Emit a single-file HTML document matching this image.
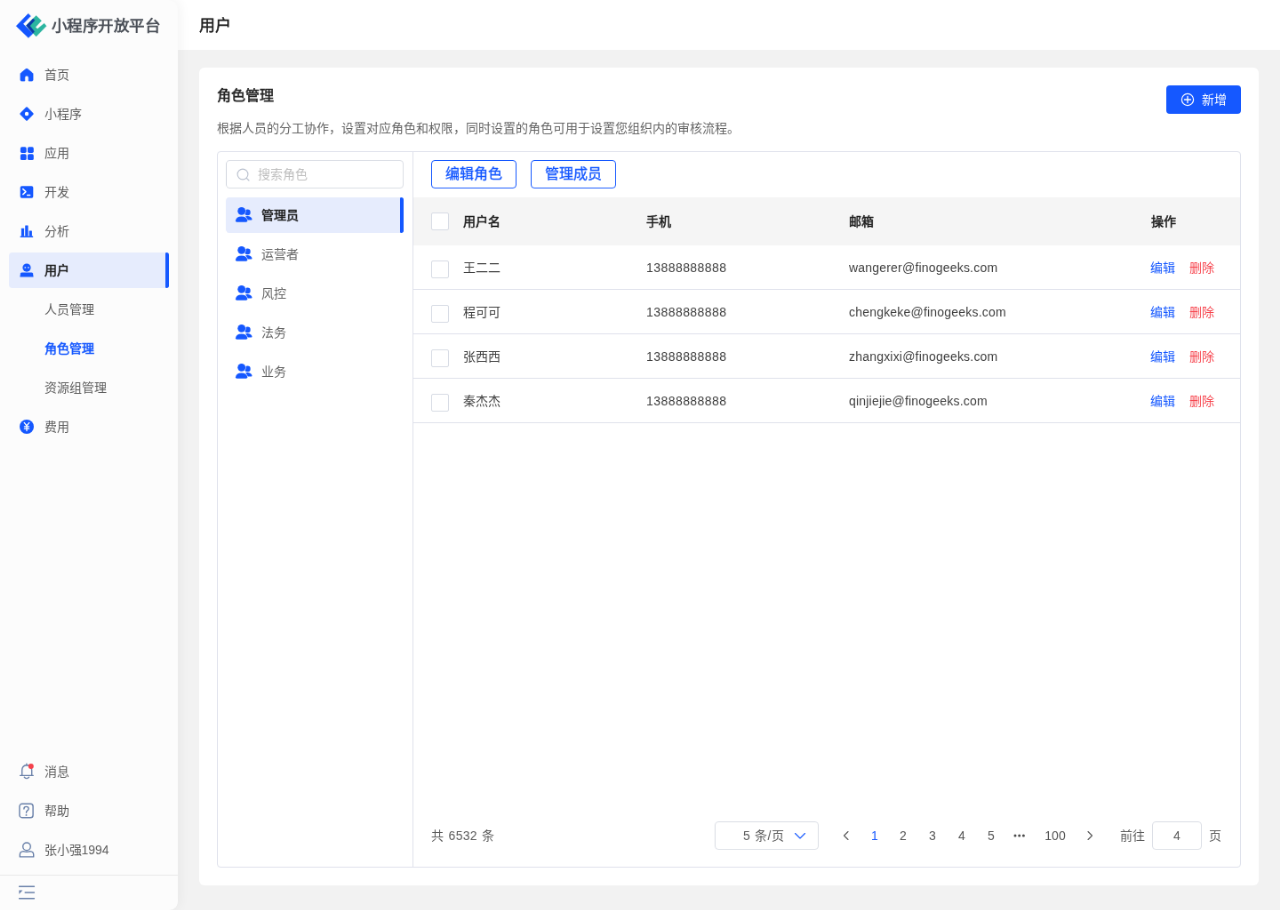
<!DOCTYPE html>
<html lang="zh-CN">
<head>
<meta charset="utf-8">
<title>用户 - 角色管理</title>
<style>
*{box-sizing:border-box;margin:0;padding:0}
html,body{width:1280px;height:910px;overflow:hidden;background:#f2f2f2}
body{font-family:"Liberation Sans",sans-serif;color:#333}
#stage{position:absolute;left:0;top:0;width:1440px;height:1024px;transform:scale(0.888889);transform-origin:0 0;overflow:hidden;will-change:transform}
.abs{position:absolute}
/* header */
#header{position:absolute;left:0;top:0;width:1440px;height:56px;background:#fff}
#header .t{position:absolute;left:224px;top:.8px;line-height:56px;font-size:18px;font-weight:400;color:#1f1f1f;-webkit-text-stroke:.45px #1f1f1f}
/* sidebar */
#side{position:absolute;left:0;top:0;width:200px;height:1024px;background:#fcfcfc;border-radius:0 10px 10px 0;box-shadow:2px 0 14px rgba(0,0,0,.05)}
#logo-t{position:absolute;left:57.5px;top:15.5px;line-height:26px;font-size:17.5px;letter-spacing:.6px;font-weight:700;color:#4b5058;white-space:nowrap}
.mi{position:absolute;left:10px;width:180px;height:40px;border-radius:4px;font-size:14px;line-height:40px;color:#5e5e5e}
.mi span{position:absolute;left:39.5px;top:0;white-space:nowrap}
.mi svg{position:absolute;left:10px;top:10px;width:20px;height:20px;overflow:visible}
.mi.act{background:#e6ecfd;color:#1f1f1f;-webkit-text-stroke:.55px #1f1f1f}
.mi.act:after{content:"";position:absolute;right:0;top:0;width:4px;height:40px;background:#1558ff;border-radius:2px 4px 4px 2px}
.mi.cur{color:#1558ff;-webkit-text-stroke:.55px #1558ff}
#sdiv{position:absolute;left:0;top:983.5px;width:200px;height:1.2px;background:#e9e9e9}
/* card */
#card{position:absolute;left:224px;top:76px;width:1192px;height:920px;background:#fff;border-radius:6px}
#ct{position:absolute;left:244px;top:95.6px;font-size:16px;line-height:24px;font-weight:400;color:#262626;-webkit-text-stroke:.55px #262626}
#cd{position:absolute;left:244px;top:134px;font-size:14px;line-height:20px;color:#666;white-space:nowrap}
#add{position:absolute;left:1312px;top:96px;width:84px;height:32px;background:#1558ff;border-radius:4px;color:#fff;font-size:14px;line-height:32px}
#add span{position:absolute;left:40px;top:0}
#add svg{position:absolute;left:16px;top:8px;width:16px;height:16px}
#panel{position:absolute;left:244px;top:170px;width:1152px;height:806px;border:1px solid #dfe2ec;border-radius:4px}
#vdiv{position:absolute;left:464px;top:171px;width:1px;height:804px;background:#dfe2ec}
#search{position:absolute;left:254px;top:180px;width:200px;height:32px;border:1px solid #dcdfe6;border-radius:4px;background:#fff}
#search span{position:absolute;left:35px;top:0;line-height:30px;font-size:14px;color:#bfbfbf}
#search svg{position:absolute;left:11.3px;top:7.7px;width:16px;height:16px;overflow:visible}
.ri{position:absolute;left:254px;width:200px;height:40px;border-radius:4px;font-size:14px;line-height:40px;color:#666}
.ri span{position:absolute;left:39.6px;top:0}
.ri svg{position:absolute;left:10px;top:10px;width:20px;height:20px;overflow:visible}
.ri svg .f{stroke:#fff}.ri.act svg .f{stroke:#e6ecfd}
.ri.act{background:#e6ecfd;color:#1f1f1f;-webkit-text-stroke:.55px #1f1f1f}
.ri.act:after{content:"";position:absolute;right:0;top:0;width:4px;height:40px;background:#1558ff;border-radius:2px 4px 4px 2px}
.ob{position:absolute;top:180px;width:96px;height:32px;border:1px solid #1558ff;border-radius:4px;color:#1558ff;font-size:16px;line-height:30px;text-align:center;background:#fff;-webkit-text-stroke:.3px #1558ff}
#th{position:absolute;left:465px;top:222px;width:930px;height:54px;background:#f5f5f5}
.hc{position:absolute;top:222px;line-height:54px;font-size:14px;color:#1f1f1f;-webkit-text-stroke:.55px #1f1f1f}
.rl{position:absolute;left:465px;width:930px;height:1px;background:#dfe2ec}
.c{position:absolute;font-size:14px;line-height:50px;color:#404040;white-space:nowrap}
.cb{position:absolute;left:485px;width:20px;height:20px;border:1px solid #d8dce5;border-radius:2px;background:#fff}
.ph{letter-spacing:.44px}.em{letter-spacing:.2px}
.ed{color:#1558ff}.de{color:#f7464f}
.pg{position:absolute;top:924px;line-height:32px;font-size:14px;color:#5c5c5c;white-space:nowrap}
</style>
</head>
<body>
<div id="stage">
<div id="header"><div class="t">用户</div></div>
<div id="side">
<svg class="abs" style="left:15.2px;top:11.6px;width:40.5px;height:33.75px" viewBox="0 0 1092 910"><polygon points="85,465 450,90 525,160 295,400 590,695 455,820" fill="#1456ff" stroke="#1456ff" stroke-width="12" stroke-linejoin="round"/><polygon points="390,450 690,150 850,305 670,500 730,555 935,385 1000,465 690,780" fill="#2bb5a0" stroke="#2bb5a0" stroke-width="12" stroke-linejoin="round"/><polygon points="595,240 650,290 500,460 640,635 590,690 390,450" fill="#0c3aa6" stroke="#0c3aa6" stroke-width="10" stroke-linejoin="round"/></svg>
<div id="logo-t">小程序开放平台</div>
<div class="mi " style="top:64px"><svg viewBox="0 0 20 20"><path d="M8.9 3.7 Q10 2.8 11.1 3.7 L16.4 8 Q17 8.5 17 9.3 V15.8 Q17 17 15.8 17 H12.2 V13.2 Q12.2 11 10 11 Q7.8 11 7.8 13.2 V17 H4.2 Q3 17 3 15.8 V9.3 Q3 8.5 3.6 8 Z" fill="#1558ff" stroke="#1558ff" stroke-width="0.8" stroke-linejoin="round"/></svg><span>首页</span></div>
<div class="mi " style="top:108px"><svg viewBox="0 0 20 20"><path d="M10 3.4 L16.6 10 L10 16.6 L3.4 10 Z" fill="#1558ff" stroke="#1558ff" stroke-width="2.2" stroke-linejoin="round"/><circle cx="10" cy="10" r="2.2" fill="#fff"/></svg><span>小程序</span></div>
<div class="mi " style="top:152px"><svg viewBox="0 0 20 20"><g fill="#1558ff"><rect x="2.9" y="3.2" width="6.8" height="6.8" rx="1.7"/><rect x="11" y="3.2" width="6.8" height="6.8" rx="1.7"/><rect x="2.9" y="11.3" width="6.8" height="6.8" rx="1.7"/><rect x="11" y="11.3" width="6.8" height="6.8" rx="1.7"/></g></svg><span>应用</span></div>
<div class="mi " style="top:196px"><svg viewBox="0 0 20 20"><rect x="2.7" y="3.2" width="14.6" height="13.6" rx="1.8" fill="#1558ff"/><path d="M5.8 6.6 L9 9.6 L5.8 12.6" fill="none" stroke="#fff" stroke-width="1.5" stroke-linecap="round" stroke-linejoin="round"/><path d="M10.6 13.4 H13.6" stroke="#fff" stroke-width="1.5" stroke-linecap="round"/></svg><span>开发</span></div>
<div class="mi " style="top:240px"><svg viewBox="0 0 20 20"><g fill="#1558ff"><rect x="3.9" y="6.8" width="3.2" height="9" rx="0.5"/><rect x="8.2" y="3.6" width="3.4" height="12.2" rx="0.5"/><rect x="12.7" y="9.6" width="3.2" height="6.2" rx="0.5"/><rect x="2.6" y="15.4" width="14.6" height="1.6" rx="0.5"/></g></svg><span>分析</span></div>
<div class="mi act" style="top:284px"><svg viewBox="0 0 20 20"><circle cx="10" cy="7.1" r="4.6" fill="#1558ff"/><path d="M4.6 12.4 H15.4 Q16.6 12.4 17 13.6 L17.6 17.4 H2.4 L3 13.6 Q3.4 12.4 4.6 12.4 Z" fill="#1558ff"/><ellipse cx="8.3" cy="6.9" rx="1" ry="0.7" fill="#fff"/><ellipse cx="11.9" cy="6.9" rx="1" ry="0.7" fill="#fff"/></svg><span>用户</span></div>
<div class="mi " style="top:328px"><span>人员管理</span></div>
<div class="mi cur" style="top:372px"><span>角色管理</span></div>
<div class="mi " style="top:416px"><span>资源组管理</span></div>
<div class="mi " style="top:460px"><svg viewBox="0 0 20 20"><circle cx="10" cy="10" r="8" fill="#1558ff"/><path d="M7.2 5.4 L10 9 L12.8 5.4 M10 9 V14.6 M7.4 9.8 H12.6 M7.4 12.2 H12.6" fill="none" stroke="#fff" stroke-width="1.3" stroke-linecap="round"/></svg><span>费用</span></div>
<div class="mi " style="top:848px"><svg viewBox="0 0 20 20"><path d="M2.6 14.4 H17.2 M4.7 14.4 V8.6 Q4.7 3.2 9.9 2.7 Q15.7 3.2 15.7 8.6 V14.4 M9.9 2.7 V1.2 M7.3 16.2 Q9.9 19 12.5 16.2" fill="none" stroke="#6980a9" stroke-width="1.4" stroke-linecap="round" stroke-linejoin="round"/><circle cx="14.8" cy="3.9" r="3" fill="#f5424c"/></svg><span>消息</span></div>
<div class="mi " style="top:892px"><svg viewBox="0 0 20 20"><rect x="1.9" y="2.3" width="15.2" height="15.4" rx="2.8" fill="none" stroke="#6980a9" stroke-width="1.4"/><path d="M6.9 8 Q6.9 5.4 9.5 5.4 Q12.1 5.4 12.1 7.7 Q12.1 9 10.7 9.9 Q9.5 10.7 9.5 12.3" fill="none" stroke="#6980a9" stroke-width="1.4" stroke-linecap="round"/><circle cx="9.5" cy="14.9" r="0.95" fill="#6980a9"/></svg><span>帮助</span></div>
<div class="mi " style="top:936px"><svg viewBox="0 0 20 20"><circle cx="10" cy="6.3" r="4.3" fill="none" stroke="#6980a9" stroke-width="1.4"/><path d="M2.3 17.9 H17.7 V15.4 Q17.7 12 13.8 11.6 Q10 13 6.2 11.6 Q2.3 12 2.3 15.4 Z" fill="none" stroke="#6980a9" stroke-width="1.4" stroke-linejoin="round"/></svg><span>张小强1994</span></div>
<div id="sdiv"></div>
<svg class="abs" style="left:20px;top:994px;width:20px;height:20px" viewBox="0 0 20 20"><path d="M1.6 3.2 H18.4 M8.2 10 H18.4 M1.6 16.8 H18.4" stroke="#6980a9" stroke-width="1.5" stroke-linecap="round"/><path d="M1.4 7.4 H5.4 L1.4 11.8 Z" fill="#6980a9"/></svg>
</div>
<div id="card"></div>
<div id="ct">角色管理</div>
<div id="cd">根据人员的分工协作，设置对应角色和权限，同时设置的角色可用于设置您组织内的审核流程。</div>
<div id="add"><svg viewBox="0 0 16 16"><circle cx="8" cy="8" r="6.6" fill="none" stroke="#fff" stroke-width="1.2"/><path d="M8 4.5 V11.5 M4.5 8 H11.5" stroke="#fff" stroke-width="1.35" stroke-linecap="round"/></svg><span>新增</span></div>
<div id="panel"></div>
<div id="vdiv"></div>
<div id="search"><svg viewBox="0 0 16 16"><circle cx="7" cy="7" r="5.9" fill="none" stroke="#b9c0ce" stroke-width="1.1"/><path d="M11.3 11.3 L14 14" stroke="#b9c0ce" stroke-width="1.1" stroke-linecap="round"/></svg><span>搜索角色</span></div>
<div class="ri act" style="top:222px"><svg viewBox="0 0 20 20"><g fill="#1558ff"><circle cx="14.4" cy="6.9" r="3.3"/><path d="M12.2 11.3 Q13.6 10.9 15 11.1 Q18.9 11.7 19.5 14.6 Q19.6 15.6 18.6 15.6 H13.4 Z"/></g><g class="f" fill="#1558ff" stroke-width="1.1" paint-order="stroke"><circle cx="7.7" cy="5.3" r="4.4"/><path d="M1 16.3 Q1.5 11.6 7.6 11.6 Q13.7 11.6 14.2 16.3 Q14.3 17.7 12.9 17.7 H2.3 Q0.9 17.7 1 16.3 Z"/></g></svg><span>管理员</span></div>
<div class="ri " style="top:266px"><svg viewBox="0 0 20 20"><g fill="#1558ff"><circle cx="14.4" cy="6.9" r="3.3"/><path d="M12.2 11.3 Q13.6 10.9 15 11.1 Q18.9 11.7 19.5 14.6 Q19.6 15.6 18.6 15.6 H13.4 Z"/></g><g class="f" fill="#1558ff" stroke-width="1.1" paint-order="stroke"><circle cx="7.7" cy="5.3" r="4.4"/><path d="M1 16.3 Q1.5 11.6 7.6 11.6 Q13.7 11.6 14.2 16.3 Q14.3 17.7 12.9 17.7 H2.3 Q0.9 17.7 1 16.3 Z"/></g></svg><span>运营者</span></div>
<div class="ri " style="top:310px"><svg viewBox="0 0 20 20"><g fill="#1558ff"><circle cx="14.4" cy="6.9" r="3.3"/><path d="M12.2 11.3 Q13.6 10.9 15 11.1 Q18.9 11.7 19.5 14.6 Q19.6 15.6 18.6 15.6 H13.4 Z"/></g><g class="f" fill="#1558ff" stroke-width="1.1" paint-order="stroke"><circle cx="7.7" cy="5.3" r="4.4"/><path d="M1 16.3 Q1.5 11.6 7.6 11.6 Q13.7 11.6 14.2 16.3 Q14.3 17.7 12.9 17.7 H2.3 Q0.9 17.7 1 16.3 Z"/></g></svg><span>风控</span></div>
<div class="ri " style="top:354px"><svg viewBox="0 0 20 20"><g fill="#1558ff"><circle cx="14.4" cy="6.9" r="3.3"/><path d="M12.2 11.3 Q13.6 10.9 15 11.1 Q18.9 11.7 19.5 14.6 Q19.6 15.6 18.6 15.6 H13.4 Z"/></g><g class="f" fill="#1558ff" stroke-width="1.1" paint-order="stroke"><circle cx="7.7" cy="5.3" r="4.4"/><path d="M1 16.3 Q1.5 11.6 7.6 11.6 Q13.7 11.6 14.2 16.3 Q14.3 17.7 12.9 17.7 H2.3 Q0.9 17.7 1 16.3 Z"/></g></svg><span>法务</span></div>
<div class="ri " style="top:398px"><svg viewBox="0 0 20 20"><g fill="#1558ff"><circle cx="14.4" cy="6.9" r="3.3"/><path d="M12.2 11.3 Q13.6 10.9 15 11.1 Q18.9 11.7 19.5 14.6 Q19.6 15.6 18.6 15.6 H13.4 Z"/></g><g class="f" fill="#1558ff" stroke-width="1.1" paint-order="stroke"><circle cx="7.7" cy="5.3" r="4.4"/><path d="M1 16.3 Q1.5 11.6 7.6 11.6 Q13.7 11.6 14.2 16.3 Q14.3 17.7 12.9 17.7 H2.3 Q0.9 17.7 1 16.3 Z"/></g></svg><span>业务</span></div>
<div class="ob" style="left:485px">编辑角色</div><div class="ob" style="left:597px">管理成员</div>
<div id="th"></div>
<div class="cb" style="top:238.5px"></div>
<div class="hc" style="left:521px">用户名</div><div class="hc" style="left:727px">手机</div><div class="hc" style="left:955px">邮箱</div><div class="hc" style="left:1295px">操作</div>
<div class="cb" style="top:292.5px"></div><div class="c" style="left:521px;top:276px">王二二</div><div class="c ph" style="left:727px;top:276px">13888888888</div><div class="c em" style="left:955px;top:276px">wangerer@finogeeks.com</div><div class="c ed" style="left:1294px;top:276px">编辑</div><div class="c de" style="left:1338px;top:276px">删除</div><div class="rl" style="top:325px"></div>
<div class="cb" style="top:342.5px"></div><div class="c" style="left:521px;top:326px">程可可</div><div class="c ph" style="left:727px;top:326px">13888888888</div><div class="c em" style="left:955px;top:326px">chengkeke@finogeeks.com</div><div class="c ed" style="left:1294px;top:326px">编辑</div><div class="c de" style="left:1338px;top:326px">删除</div><div class="rl" style="top:375px"></div>
<div class="cb" style="top:392.5px"></div><div class="c" style="left:521px;top:376px">张西西</div><div class="c ph" style="left:727px;top:376px">13888888888</div><div class="c em" style="left:955px;top:376px">zhangxixi@finogeeks.com</div><div class="c ed" style="left:1294px;top:376px">编辑</div><div class="c de" style="left:1338px;top:376px">删除</div><div class="rl" style="top:425px"></div>
<div class="cb" style="top:442.5px"></div><div class="c" style="left:521px;top:426px">秦杰杰</div><div class="c ph" style="left:727px;top:426px">13888888888</div><div class="c em" style="left:955px;top:426px">qinjiejie@finogeeks.com</div><div class="c ed" style="left:1294px;top:426px">编辑</div><div class="c de" style="left:1338px;top:426px">删除</div><div class="rl" style="top:475px"></div>
<div class="pg" style="left:485px;letter-spacing:.25px;word-spacing:1.2px">共 6532 条</div>
<div class="abs" style="left:804px;top:924px;width:117px;height:32px;border:1px solid #dcdfe6;border-radius:4px;background:#fff"></div><div class="pg" style="left:836px;letter-spacing:.6px">5 条/页</div><svg class="abs" style="left:893px;top:934px;width:14px;height:12px" viewBox="0 0 14 12"><path d="M1.5 3.5 L7 9 L12.5 3.5" fill="none" stroke="#1558ff" stroke-width="1.1" stroke-linecap="round" stroke-linejoin="round"/></svg>
<svg class="abs" style="left:946px;top:933px;width:12px;height:14px" viewBox="0 0 12 14"><path d="M8 2.5 L3.5 7 L8 11.5" fill="none" stroke="#555" stroke-width="1.1" stroke-linecap="round" stroke-linejoin="round"/></svg><svg class="abs" style="left:1220px;top:933px;width:12px;height:14px" viewBox="0 0 12 14"><path d="M4 2.5 L8.5 7 L4 11.5" fill="none" stroke="#555" stroke-width="1.1" stroke-linecap="round" stroke-linejoin="round"/></svg>
<div class="pg" style="left:964px;width:40px;text-align:center;color:#1558ff">1</div><div class="pg" style="left:996px;width:40px;text-align:center;color:#555">2</div><div class="pg" style="left:1029px;width:40px;text-align:center;color:#555">3</div><div class="pg" style="left:1062px;width:40px;text-align:center;color:#555">4</div><div class="pg" style="left:1095px;width:40px;text-align:center;color:#555">5</div><div class="pg" style="left:1167px;width:40px;text-align:center;color:#555">100</div><svg class="abs" style="left:1139px;top:936px;width:14px;height:8px" viewBox="0 0 14 8"><circle cx="3" cy="4" r="1.5" fill="#4a4a4a"/><circle cx="7.7" cy="4" r="1.5" fill="#4a4a4a"/><circle cx="12.4" cy="4" r="1.5" fill="#4a4a4a"/></svg>
<div class="pg" style="left:1260px">前往</div><div class="abs" style="left:1296px;top:924px;width:56px;height:32px;border:1px solid #dcdfe6;border-radius:4px;background:#fff"></div><div class="pg" style="left:1304px;width:40px;text-align:center">4</div><div class="pg" style="left:1360px">页</div>
</div>
</body>
</html>
